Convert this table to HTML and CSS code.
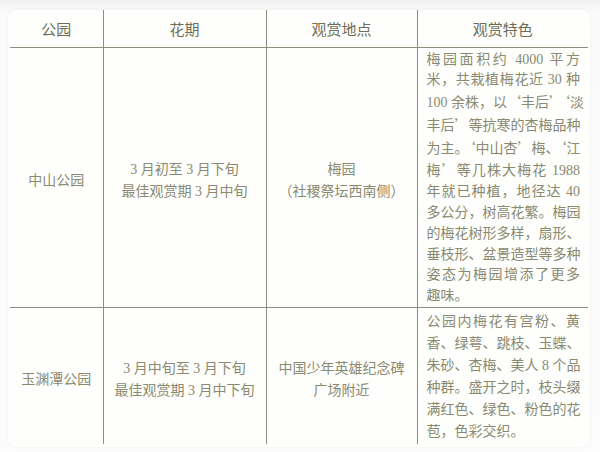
FILE: index.html
```html
<!DOCTYPE html>
<html lang="zh">
<head>
<meta charset="utf-8">
<link rel="stylesheet" href="styles.css">
</head>
<body>
<div class="card">
  <table class="plum">
    <colgroup>
      <col class="c1"><col class="c2"><col class="c3"><col class="c4">
    </colgroup>
    <thead>
      <tr class="hr"><th>公园</th><th>花期</th><th>观赏地点</th><th>观赏特色</th></tr>
    </thead>
    <tbody>
      <tr class="r1">
        <td class="mid">中山公园</td>
        <td class="mid">3 月初至 3 月下旬<br>最佳观赏期 3 月中旬</td>
        <td class="mid">梅园<br>（社稷祭坛西南侧）</td>
        <td class="desc">
          <span class="ln">梅园面积约 4000 平方</span>
          <span class="ln">米，共栽植梅花近 30 种</span>
          <span class="ln">100 余株，以<span class="q">‘</span>丰后<span class="q">’‘</span>淡</span>
          <span class="ln">丰后<span class="q">’</span>等抗寒的杏梅品种</span>
          <span class="ln">为主。<span class="q">‘</span>中山杏<span class="q">’</span>梅、<span class="q">‘</span>江</span>
          <span class="ln">梅<span class="q">’</span>等几株大梅花 1988</span>
          <span class="ln">年就已种植，地径达 40</span>
          <span class="ln">多公分，树高花繁。梅园</span>
          <span class="ln">的梅花树形多样，扇形、</span>
          <span class="ln">垂枝形、盆景造型等多种</span>
          <span class="ln">姿态为梅园增添了更多</span>
          <span class="ln last">趣味。</span>
        </td>
      </tr>
      <tr class="r2">
        <td class="mid">玉渊潭公园</td>
        <td class="mid">3 月中旬至 3 月下旬<br>最佳观赏期 3 月中下旬</td>
        <td class="mid">中国少年英雄纪念碑<br>广场附近</td>
        <td class="desc">
          <span class="ln">公园内梅花有宫粉、黄</span>
          <span class="ln">香、绿萼、跳枝、玉蝶、</span>
          <span class="ln">朱砂、杏梅、美人 8 个品</span>
          <span class="ln">种群。盛开之时，枝头缀</span>
          <span class="ln">满红色、绿色、粉色的花</span>
          <span class="ln last">苞，色彩交织。</span>
        </td>
      </tr>
    </tbody>
  </table>
</div>
</body>
</html>
```

FILE: styles.css
```css
html, body {
  margin: 0;
  padding: 0;
}
body {
  width: 600px;
  height: 452px;
  background: linear-gradient(#f0f0f0 0, #fafafa 12px, #fcfcfc 100%);
  font-family: "Liberation Serif", "Noto Sans CJK SC", serif;
  overflow: hidden;
}
.card {
  margin: 10px 10px 0 8px;
  padding: 0 2px 3px 2px;
  background: #fefefc;
  border-radius: 8px;
  box-shadow: 0 0 3px rgba(0,0,0,0.06);
  width: 578px;
}
.plum {
  border-collapse: collapse;
  table-layout: fixed;
  width: 578px;
  color: #8a8a70;
}
.c1 { width: 93px; }
.c2 { width: 163px; }
.c3 { width: 151px; }
.c4 { width: 171px; }
.hr { height: 37px; }
.r1 { height: 260px; }
.r2 { height: 136px; }
.plum th {
  padding: 0;
  font-family: "Noto Sans CJK SC", sans-serif;
  font-weight: 400;
  font-size: 15px;
  color: #6e6e58;
  border-bottom: 1px solid #8e8e80;
  text-align: center;
  vertical-align: middle;
}
.plum th + th,
.plum td + td {
  border-left: 1px solid #8e8e80;
}
.plum td {
  padding: 0 5px;
  font-size: 14px;
  line-height: 22px;
  text-align: center;
  vertical-align: middle;
}
.plum td.mid {
  padding-top: 8px;
}
.r1 td {
  border-bottom: 1px solid #8e8e80;
}
.plum td.desc {
  padding: 2px 8px 0 9px;
  line-height: 20.8px;
}
.r2 td.desc {
  line-height: 22px;
  padding-top: 2px;
}
.ln {
  display: block;
  text-align: justify;
  text-align-last: justify;
  white-space: nowrap;
}
.ln.last {
  text-align-last: left;
}
.q {
  font-family: "Noto Sans CJK SC", sans-serif;
}
```
